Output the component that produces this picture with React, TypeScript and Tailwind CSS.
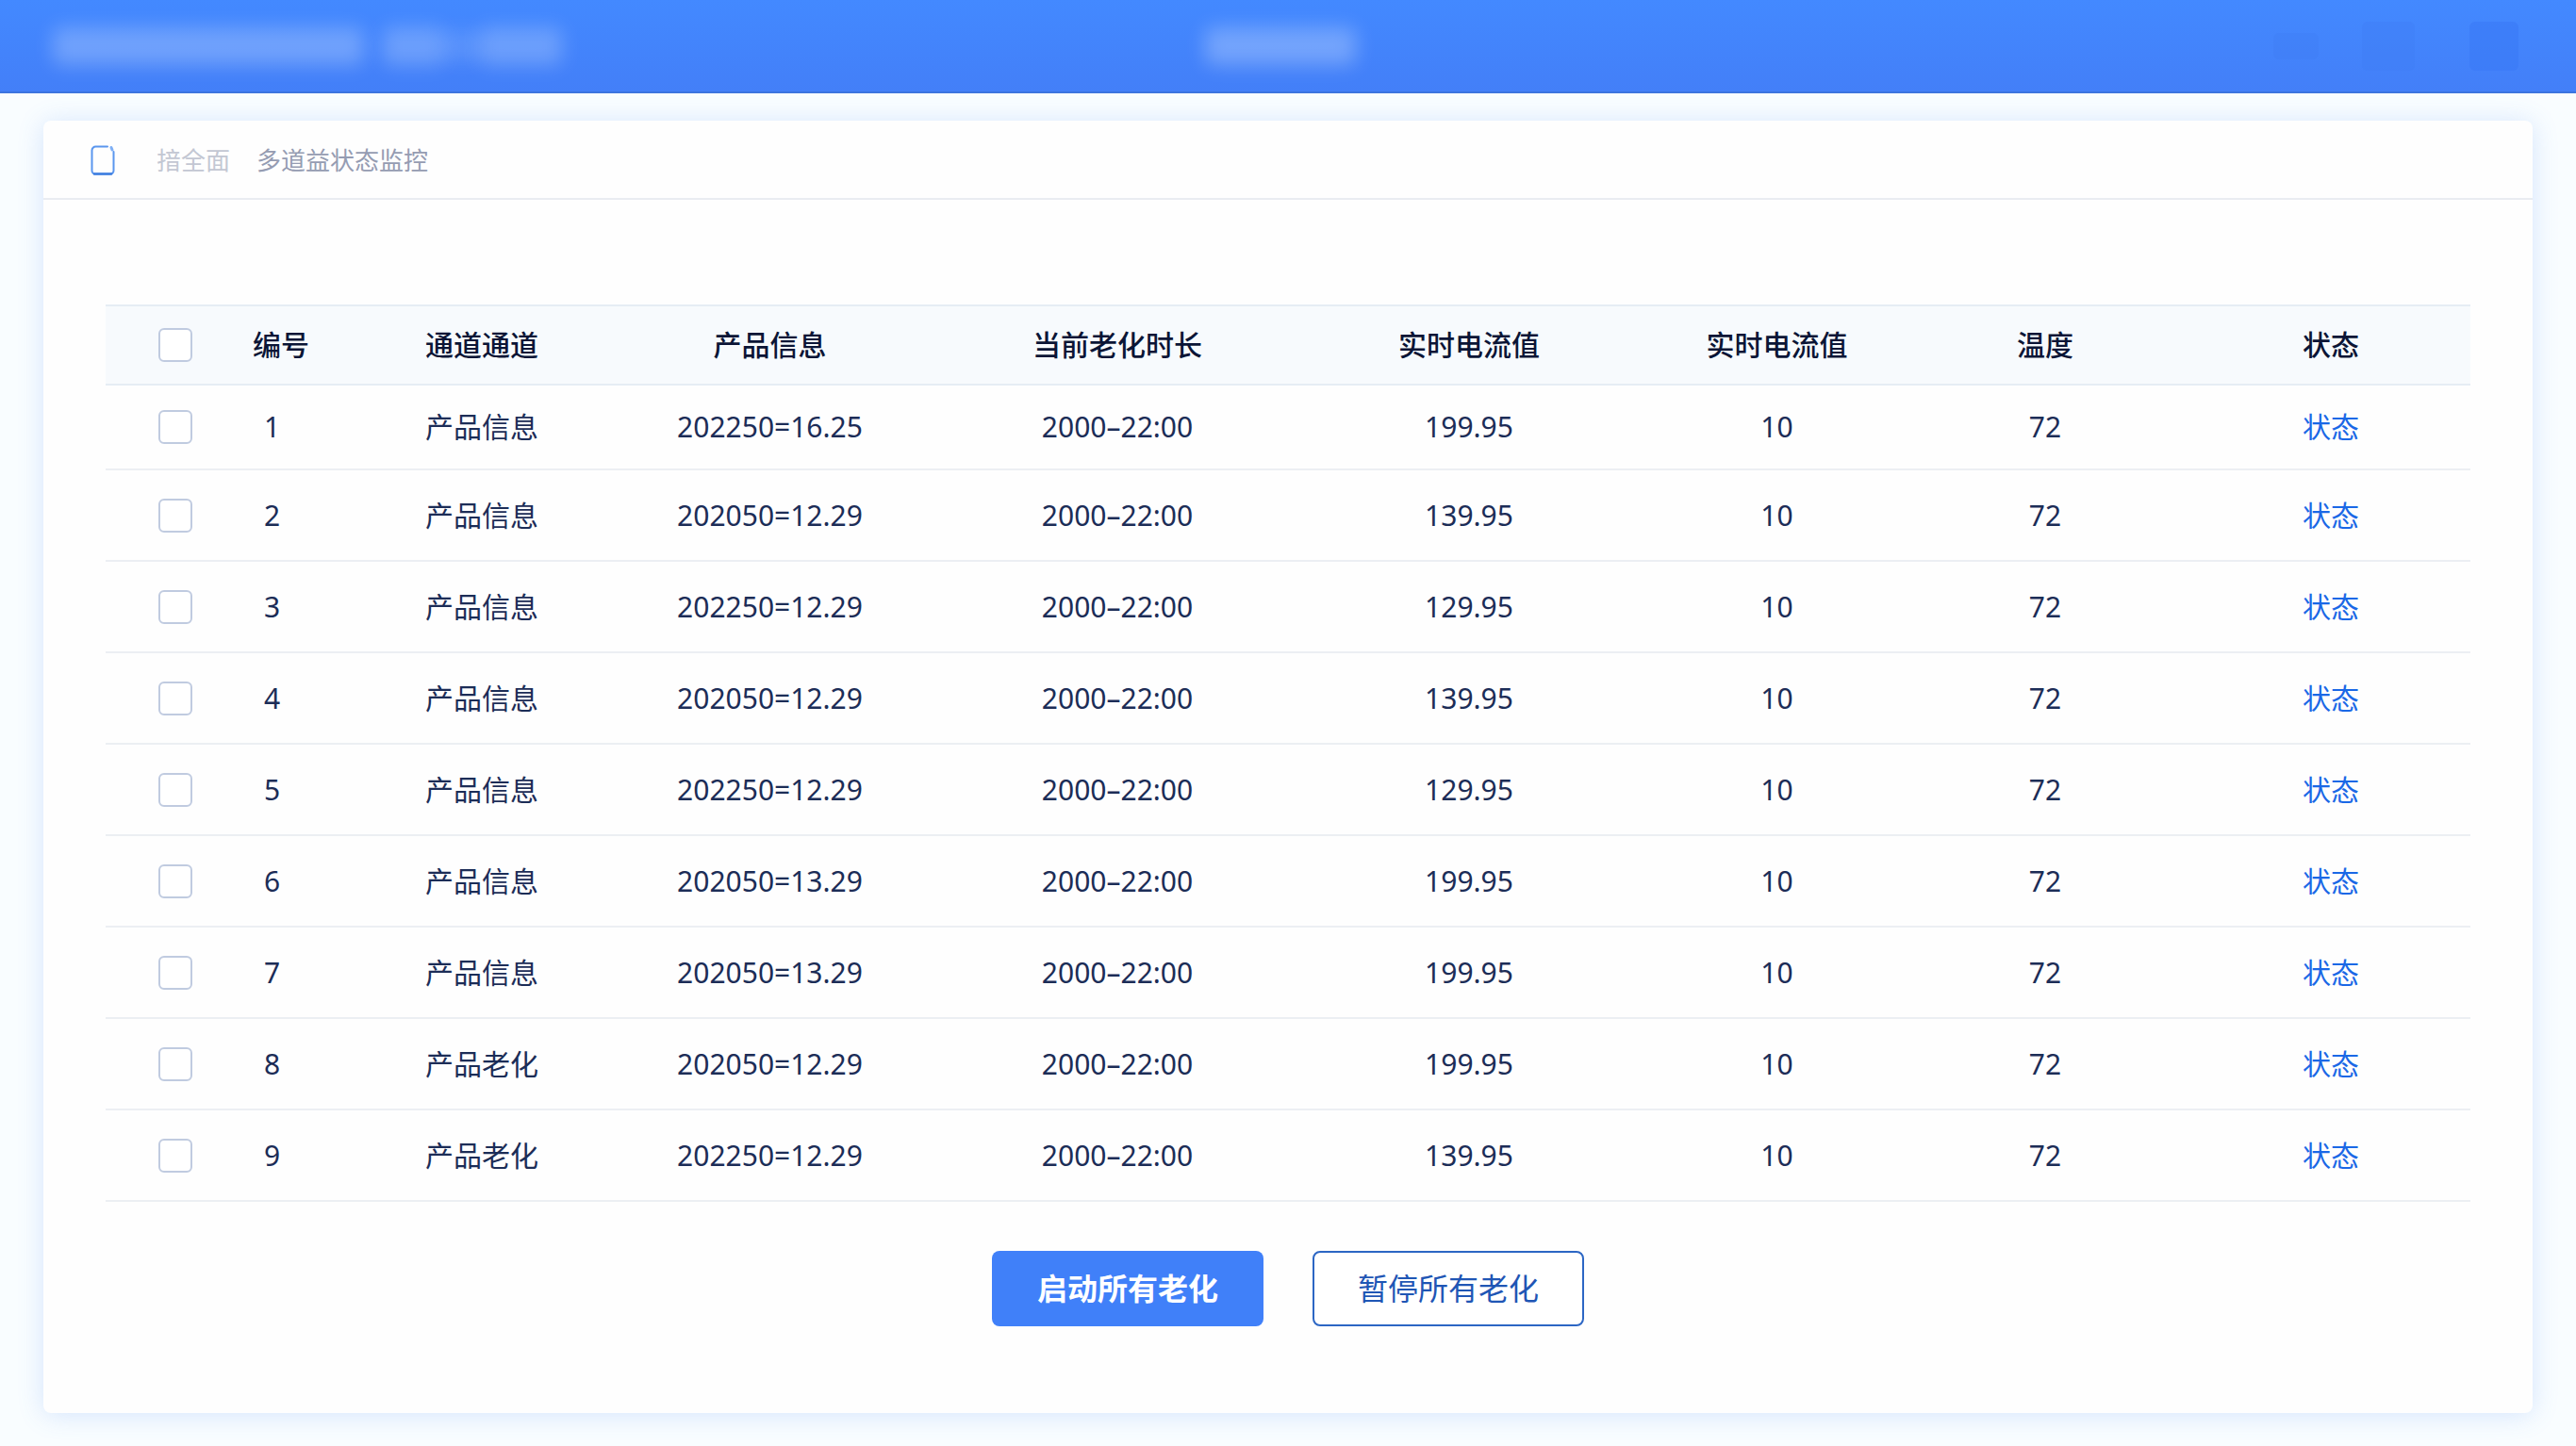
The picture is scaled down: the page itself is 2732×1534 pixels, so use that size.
import { useState } from 'react';

interface Channel {
  id: number;
  name: string;
  info: string;
  duration: string;
  current: string;
  voltage: string;
  temperature: string;
}

const channels: Channel[] = [
  { id: 1, name: '产品信息', info: '202250=16.25', duration: '2000–22:00', current: '199.95', voltage: '10', temperature: '72' },
  { id: 2, name: '产品信息', info: '202050=12.29', duration: '2000–22:00', current: '139.95', voltage: '10', temperature: '72' },
  { id: 3, name: '产品信息', info: '202250=12.29', duration: '2000–22:00', current: '129.95', voltage: '10', temperature: '72' },
  { id: 4, name: '产品信息', info: '202050=12.29', duration: '2000–22:00', current: '139.95', voltage: '10', temperature: '72' },
  { id: 5, name: '产品信息', info: '202250=12.29', duration: '2000–22:00', current: '129.95', voltage: '10', temperature: '72' },
  { id: 6, name: '产品信息', info: '202050=13.29', duration: '2000–22:00', current: '199.95', voltage: '10', temperature: '72' },
  { id: 7, name: '产品信息', info: '202050=13.29', duration: '2000–22:00', current: '199.95', voltage: '10', temperature: '72' },
  { id: 8, name: '产品老化', info: '202050=12.29', duration: '2000–22:00', current: '199.95', voltage: '10', temperature: '72' },
  { id: 9, name: '产品老化', info: '202250=12.29', duration: '2000–22:00', current: '139.95', voltage: '10', temperature: '72' },
];

interface CheckboxProps {
  label: string;
  checked: boolean;
  onChange: () => void;
}

function Checkbox({ label, checked, onChange }: CheckboxProps) {
  return (
    <input
      type="checkbox"
      aria-label={label}
      checked={checked}
      onChange={onChange}
      className="block mx-auto w-9 h-9 appearance-none rounded-md border-2 border-[#c0cbe0] bg-white checked:bg-[#3f80f8] cursor-pointer"
    />
  );
}

export default function App() {
  const [selected, setSelected] = useState<number[]>([]);
  const allSelected = selected.length === channels.length;

  const toggle = (id: number) => {
    setSelected(selected.includes(id) ? selected.filter((s) => s !== id) : [...selected, id]);
  };

  return (
    <div className="min-h-screen bg-[#f9fdff] font-['Noto_Sans','Noto_Sans_CJK_SC',sans-serif] text-[#1c2d57]">
      {/* Header */}
      <header className="grid grid-cols-3 items-center h-[99px] bg-linear-to-b from-[#4389ff] to-[#437ff8] border-b-2 border-[#3c74df]">
        <div className="flex items-center pl-14">
          <div className="w-[330px] h-10 rounded-lg bg-white/24 blur-[10px]" />
          <div className="w-[66px] h-10 ml-5 rounded-lg bg-white/22 blur-[10px]" />
          <div className="w-9 h-8 bg-white/12 blur-[10px]" />
          <div className="w-[88px] h-10 rounded-lg bg-white/22 blur-[10px]" />
        </div>
        <div className="flex justify-center pr-4">
          <div className="w-40 h-10 rounded-lg bg-white/26 blur-[10px]" />
        </div>
        <div className="flex items-center justify-end pr-[61px]">
          <div className="w-12 h-7 rounded-md bg-[#3f7cf5]/40" />
          <div className="w-14 h-[52px] ml-[46px] rounded-md bg-[#3f7cf5]/40" />
          <div className="w-[52px] h-[52px] ml-[58px] rounded-md bg-[#3b79f6]/60" />
        </div>
      </header>

      <main className="px-[46px] pt-[29px] pb-9">
        <div className="bg-[#fefefe] rounded-lg shadow-[0_2px_28px_rgba(70,130,240,0.2)]">
          {/* Breadcrumb */}
          <nav className="flex items-center h-[84px] pt-0.5 pl-[50px] border-b-2 border-[#e9ecf1] text-[26px] leading-9">
            <svg className="w-[26px] h-8" viewBox="0 0 26 32" fill="none" strokeLinecap="round">
              <path d="M18 1.5H5.500a4 4 0 0 0-4 4V27a3.500 3.500 0 0 0 3.500 3.500h16a3.500 3.500 0 0 0 3.500-3.500V7" stroke="#5a96ee" strokeWidth="2" />
              <path d="M4 30.500h18" stroke="#3f7fe0" strokeWidth="2.500" />
              <path d="M22 2.500l1 2.500" stroke="#7fb0f5" strokeWidth="3" />
            </svg>
            <a href="#" className="ml-11 text-[#c3c7d3]">揞全面</a>
            <span className="ml-7 text-[#959cb2]">多道益状态监控</span>
          </nav>

          <div className="px-[66px] pt-[111px] pb-[92px]">
            <table className="w-full table-fixed border-collapse text-center text-[30px] leading-10">
              <colgroup>
                <col className="w-[148px]" />
                <col className="w-[138px]" />
                <col className="w-[226px]" />
                <col className="w-[385px]" />
                <col className="w-[352px]" />
                <col className="w-[394px]" />
                <col className="w-[259px]" />
                <col className="w-[310px]" />
                <col className="w-[296px]" />
              </colgroup>
              <thead>
                <tr className="h-[84px] bg-[#f7fafd] border-y-2 border-[#e6edf4] text-[#0b1536]">
                  <th>
                    <Checkbox
                      label="全选"
                      checked={allSelected}
                      onChange={() => setSelected(allSelected ? [] : channels.map((c) => c.id))}
                    />
                  </th>
                  <th className="pl-2 text-left font-medium">编号</th>
                  <th className="font-medium">通道通道</th>
                  <th className="font-medium">产品信息</th>
                  <th className="font-medium">当前老化时长</th>
                  <th className="font-medium">实时电流值</th>
                  <th className="font-medium">实时电流值</th>
                  <th className="font-medium">温度</th>
                  <th className="font-medium">状态</th>
                </tr>
              </thead>
              <tbody>
                {channels.map((c) => (
                  <tr key={c.id} className="h-[97px] first:h-[90px] border-b-2 border-[#eceff3]">
                    <td>
                      <Checkbox label={`选择 ${c.id}`} checked={selected.includes(c.id)} onChange={() => toggle(c.id)} />
                    </td>
                    <td className="pl-5 text-left">{c.id}</td>
                    <td>{c.name}</td>
                    <td>{c.info}</td>
                    <td>{c.duration}</td>
                    <td>{c.current}</td>
                    <td>{c.voltage}</td>
                    <td>{c.temperature}</td>
                    <td>
                      <a href="#" className="text-[#1a68e6]">状态</a>
                    </td>
                  </tr>
                ))}
              </tbody>
            </table>

            {/* Actions */}
            <div className="flex justify-center gap-[52px] mt-[52px]">
              <button className="w-[288px] h-20 rounded-lg bg-[#4080f9] text-[32px] leading-10 font-bold text-white cursor-pointer">
                启动所有老化
              </button>
              <button className="w-[288px] h-20 rounded-lg border-2 border-[#2c66c4] bg-white text-[32px] leading-10 text-[#1f56b5] cursor-pointer">
                暂停所有老化
              </button>
            </div>
          </div>
        </div>
      </main>
    </div>
  );
}
